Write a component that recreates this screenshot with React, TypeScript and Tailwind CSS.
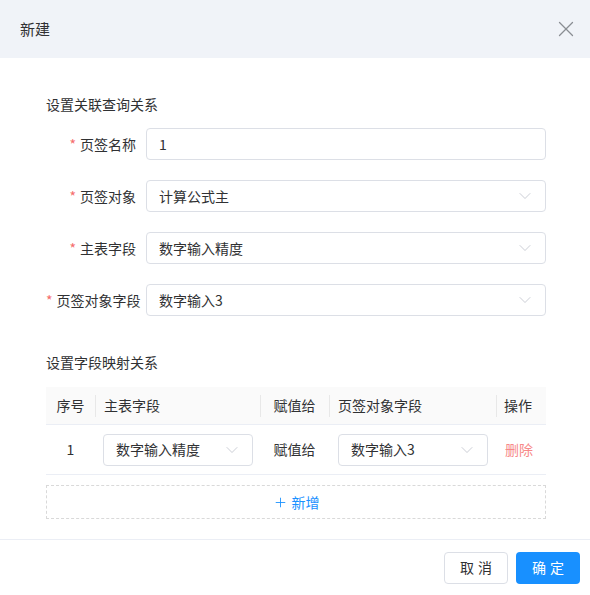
import { X, ChevronDown, Plus } from 'lucide-react';

const FONT = { fontFamily: '"Noto Sans CJK SC", "Noto Sans", sans-serif' };

const formRows = [
  { label: '页签名称', value: '1', select: false },
  { label: '页签对象', value: '计算公式主', select: true },
  { label: '主表字段', value: '数字输入精度', select: true },
  { label: '页签对象字段', value: '数字输入3', select: true },
];

function Field({ value, select, className = '' }: { value: string; select: boolean; className?: string }) {
  return (
    <div
      className={`flex items-center justify-between h-8 pl-3 pr-[10px] rounded-[4px] border border-[#dcdfe6] bg-white text-[14px] text-[#303133] ${className}`}
    >
      <span>{value}</span>
      {select && <ChevronDown className="w-5 h-5 text-[#c0c4cc]" strokeWidth={1} />}
    </div>
  );
}

export default function App() {
  return (
    <div className="w-[590px] h-[595px] bg-white flex flex-col text-[#303133]" style={FONT}>
      {/* Header */}
      <div className="h-[58px] bg-[#f0f3f8] flex items-center justify-between pl-5 pr-[11px] shrink-0">
        <span className="text-[15px] text-[#303133]">新建</span>
        <X className="w-[26px] h-[26px] text-[#8a8d93]" strokeWidth={1.2} />
      </div>

      {/* Body */}
      <div className="flex-1 pl-[46px] pr-[44px] pt-[35px]">
        <div className="text-[14px] leading-[22px] mb-[13px]">设置关联查询关系</div>
        <div className="flex flex-col gap-5">
          {formRows.map((r) => (
            <div key={r.label} className="flex items-center">
              <div className="w-[100px] pr-[10px] text-right text-[14px] whitespace-nowrap">
                <span className="text-[#f56c6c] mr-1">*</span>
                {r.label}
              </div>
              <Field value={r.value} select={r.select} className="flex-1" />
            </div>
          ))}
        </div>

        <div className="text-[14px] leading-[22px] mt-[35px] mb-[14px]">设置字段映射关系</div>

        {/* Table */}
        <div className="text-[14px]">
          <div className="flex h-[38px] bg-[#fafafa] border-b border-[#ebeef5] items-center">
            <div className="w-[49px] text-center">序号</div>
            <div className="w-[165px] h-full flex items-center pl-[9px] relative">
              <span className="absolute left-0 top-[8px] h-[22px] w-px bg-[#e8e8e8]" />
              主表字段
            </div>
            <div className="w-[69px] h-full flex items-center justify-center relative">
              <span className="absolute left-0 top-[8px] h-[22px] w-px bg-[#e8e8e8]" />
              赋值给
            </div>
            <div className="w-[167px] h-full flex items-center pl-[9px] relative">
              <span className="absolute left-0 top-[8px] h-[22px] w-px bg-[#e8e8e8]" />
              页签对象字段
            </div>
            <div className="flex-1 h-full flex items-center pl-2 relative">
              <span className="absolute left-0 top-[8px] h-[22px] w-px bg-[#e8e8e8]" />
              操作
            </div>
          </div>
          <div className="flex h-[50px] items-center border-b border-[#ebeef5]">
            <div className="w-[49px] text-center">1</div>
            <div className="w-[165px] pl-2">
              <Field value="数字输入精度" select className="w-[150px]" />
            </div>
            <div className="w-[69px] text-center">赋值给</div>
            <div className="w-[167px] pl-[9px]">
              <Field value="数字输入3" select className="w-[150px]" />
            </div>
            <div className="flex-1 pl-[9px] text-[#f78989]">删除</div>
          </div>
          <div className="mt-[10px] h-[34px] border border-dashed border-[#d9d9d9] flex items-center justify-center gap-1 text-[#1890ff] text-[14px]">
            <Plus className="w-[15px] h-[15px]" strokeWidth={1.4} />
            <span>新增</span>
          </div>
        </div>
      </div>

      {/* Footer */}
      <div className="h-[56px] border-t border-[#ebeef5] flex items-center justify-end gap-2 pr-[10px] shrink-0">
        <button className="w-16 h-8 rounded-[4px] border border-[#dcdfe6] bg-white text-[14px] text-[#303133] tracking-[4px] pl-[4px]">
          取消
        </button>
        <button className="w-16 h-8 rounded-[4px] bg-[#1890ff] text-white text-[14px] tracking-[4px] pl-[4px]">
          确定
        </button>
      </div>
    </div>
  );
}
